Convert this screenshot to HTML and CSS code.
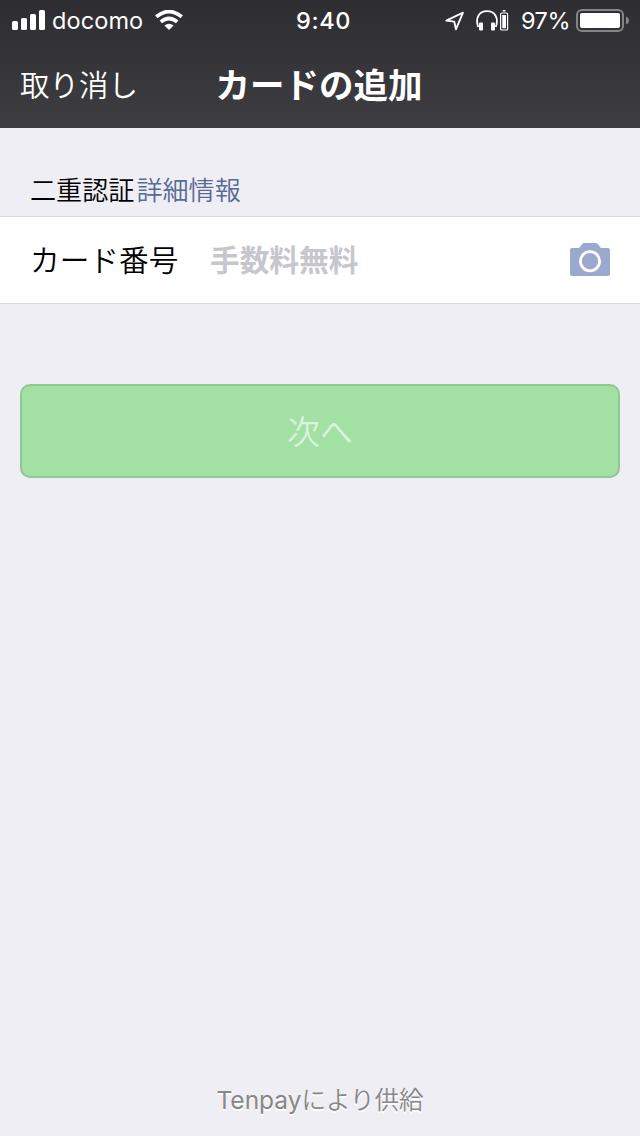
FILE: index.html
```html
<!DOCTYPE html>
<html lang="ja">
<head>
    <meta charset="UTF-8">
    <title>カードの追加</title>
    <link rel="stylesheet" href="styles.css">
</head>
<body>
    <header class="header">
        <div class="status-bar">
            <div class="status-left">
                <svg class="signal" width="34" height="20" viewBox="0 0 34 20" fill="#fff">
                    <rect x="0" y="11" width="6" height="9" rx="1.5"/>
                    <rect x="9" y="8" width="6" height="12" rx="1.5"/>
                    <rect x="18" y="4" width="6" height="16" rx="1.5"/>
                    <rect x="27" y="0" width="6" height="20" rx="1.5"/>
                </svg>
                <span class="carrier">docomo</span>
                <svg class="wifi" width="28" height="20" viewBox="0 0 28 20">
                    <path d="M1.3 6.8Q14-3.7 26.7 6.8" fill="none" stroke="#fff" stroke-width="3.8"/>
                    <path d="M5.8 11.9Q14 5.2 22.2 11.9" fill="none" stroke="#fff" stroke-width="3.8"/>
                    <path d="M9.4 15.6Q14 11.8 18.6 15.6L14 20Z" fill="#fff"/>
                </svg>
            </div>
            <span class="time">9:40</span>
            <div class="status-right">
                <svg class="location" width="20" height="20" viewBox="0 0 20 20">
                    <path d="M1.3 9.6L18 1.6L10.9 18.3L9.3 10.7Z" fill="none" stroke="#fff" stroke-width="1.8" stroke-linejoin="round"/>
                </svg>
                <svg class="headphones" width="33" height="21" viewBox="0 0 33 21">
                    <path d="M2.2 17C-1 8 3 1.2 11 1.2S23 8 19.8 17" fill="none" stroke="#fff" stroke-width="1.8"/>
                    <rect x="3" y="12.5" width="4" height="8" rx="1" fill="#fff"/>
                    <rect x="15" y="12.5" width="4" height="8" rx="1" fill="#fff"/>
                    <rect x="24.6" y="3" width="7" height="17" rx="1" fill="none" stroke="#fff" stroke-width="1.2"/>
                    <rect x="26.3" y="5" width="3.7" height="13.2" fill="#fff"/>
                    <rect x="26.5" y="0" width="3.2" height="1.6" rx=".8" fill="#fff"/>
                </svg>
                <span class="percent">97%</span>
                <svg class="battery" width="54" height="23" viewBox="0 0 54 23">
                    <rect x="1" y="1" width="46" height="21" rx="5" fill="none" stroke="#858589" stroke-width="2"/>
                    <rect x="4" y="4" width="40" height="15" rx="2" fill="#fff"/>
                    <path d="M50 7.5Q53 8.7 53 11.5T50 15.5Z" fill="#858589"/>
                </svg>
            </div>
        </div>
        <nav class="nav-bar">
            <a class="cancel">取り消し</a>
            <h1 class="title">カードの追加</h1>
        </nav>
    </header>

    <main class="content">
        <p class="notice">二重認証<a class="details">詳細情報</a></p>
        <div class="card-row">
            <label class="card-label">カード番号</label>
            <span class="placeholder">手数料無料</span>
            <svg class="camera" width="40" height="33" viewBox="0 0 40 33">
                <path d="M0 7Q0 5 2 5H9L12 1.2Q13 0 14.5 0H25.5Q27 0 28 1.2L31 5H38Q40 5 40 7V31Q40 33 38 33H2Q0 33 0 31Z" fill="#9ca9cf"/>
                <circle cx="20" cy="18.3" r="9.6" fill="none" stroke="#fff" stroke-width="2.8"/>
            </svg>
        </div>
        <button class="next-button" disabled>次へ</button>
    </main>

    <footer class="footer"><span class="brand">Tenpay</span>により供給</footer>
</body>
</html>
```
FILE: styles.css
```css
* {
    box-sizing: border-box;
}
body {
    margin: 0;
    height: 1136px;
    display: flex;
    flex-direction: column;
    background-color: #efeef5;
    font-family: "Noto Sans CJK JP", sans-serif;
    font-weight: 350;
    color: #000;
}
.header {
    height: 128px;
    background: linear-gradient(#2e2d32, #3e3d41);
    color: #fff;
}
.status-bar {
    height: 41px;
    padding: 0 11px 0 12px;
    display: grid;
    grid-template-columns: 284px auto 1fr;
    align-items: center;
    font-family: Inter, sans-serif;
    font-weight: 400;
    font-size: 24px;
    line-height: 41px;
}
.status-left,
.status-right {
    display: flex;
    align-items: center;
}
.status-right {
    justify-content: flex-end;
}
.signal,
.wifi {
    margin-bottom: 1px;
}
.carrier {
    margin: 0 12px 0 6px;
    font-size: 23.5px;
    letter-spacing: 0.1px;
}
.time {
    font-weight: 500;
    font-size: 23.5px;
    letter-spacing: 0.6px;
}
.headphones {
    margin: 0 12px 0 11px;
}
.percent {
    margin-right: 6px;
    font-size: 23.5px;
    letter-spacing: -0.5px;
}
.battery {
    margin-right: -1px;
}
.nav-bar {
    height: 87px;
    padding: 0 20px 4px;
    display: grid;
    grid-template-columns: 1fr auto 1fr;
    align-items: center;
}
.cancel {
    font-size: 29.5px;
}
.title {
    margin: 0 2px 0 0;
    font-size: 34.5px;
    font-weight: 700;
}
.content {
    flex: 1;
}
.notice {
    margin: 0;
    height: 88px;
    padding: 42px 30px 0;
    font-size: 26.1px;
    line-height: 38px;
}
.details {
    margin-left: 2px;
    color: #576b95;
}
.card-row {
    height: 88px;
    padding: 0 30px 3px;
    display: flex;
    align-items: center;
    background-color: #fff;
    border-top: 1px solid #d9d9d9;
    border-bottom: 1px solid #d9d9d9;
    font-size: 29.7px;
}
.card-label {
    width: 180px;
}
.placeholder {
    color: #c7c6cd;
    font-weight: 700;
}
.camera {
    margin: 2px 0 0 auto;
}
.next-button {
    display: block;
    width: 600px;
    height: 94px;
    margin: 80px auto 0;
    padding: 0 0 3px;
    background-color: #a3e0a4;
    border: 2px solid #90c891;
    border-radius: 10px;
    color: #daf3db;
    font-family: inherit;
    font-weight: 350;
    font-size: 33px;
}
.footer {
    height: 74px;
    padding-top: 18px;
    text-align: center;
    font-size: 24.5px;
    line-height: 38px;
    color: #888;
    text-shadow: 0 2px 0 #fff;
}
.brand {
    font-family: Inter, sans-serif;
    font-weight: 400;
}
```
